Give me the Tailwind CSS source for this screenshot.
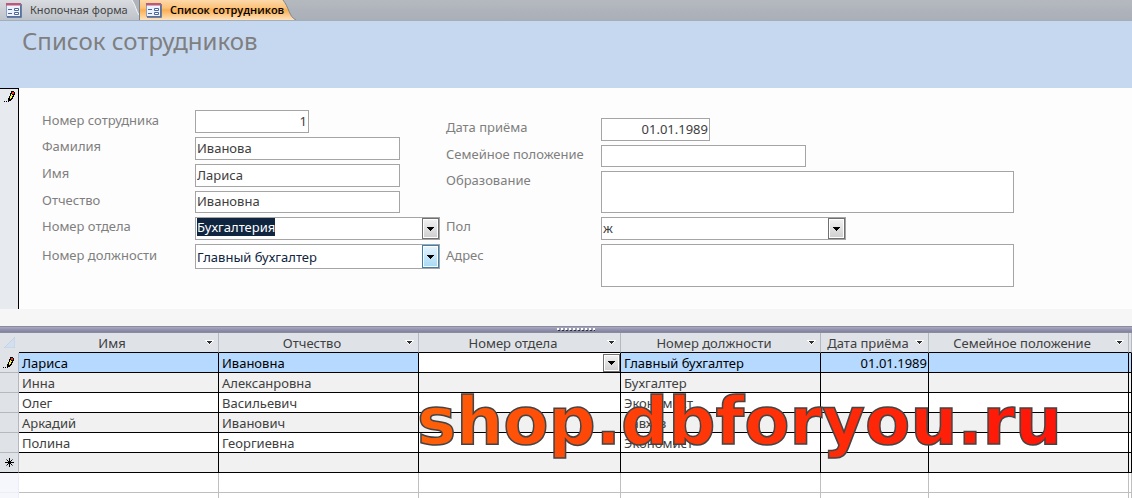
<!DOCTYPE html>
<html lang="ru">
<head>
<meta charset="utf-8">
<meta name="viewport" content="width=device-width, initial-scale=1">
<title>Список сотрудников</title>
<script src="https://cdn.jsdelivr.net/npm/@tailwindcss/browser@4"></script>
</head>
<body class="bg-white font-['Noto_Sans','Open_Sans',sans-serif] text-[13px] leading-4 text-[#404040]">
<svg class="hidden" aria-hidden="true">
  <symbol id="form" viewBox="0 0 16 16">
    <path d="M.5 1.500h14v13H.5z" fill="#eef3fb" stroke="#8ba0c4"/>
    <path d="M15 2v13H1" fill="none" stroke="#4a6494" stroke-width="1.500"/>
    <path d="M0 1h15v2.500H0z" fill="#b85a78"/>
    <path d="M2 7.500h4M2 11.500h4" stroke="#4a66a0"/>
    <path d="M8.500 6.500h4v2h-4zM8.500 10.500h4v2h-4z" fill="#fff" stroke="#4a66a0"/>
  </symbol>
  <symbol id="pencil" viewBox="0 0 12 12" shape-rendering="crispEdges">
    <path d="M0 10h1v1H0zM2 10h1v1H2z" fill="#000"/>
    <path d="M7 0h3v1h1v3h-1v2H9v2H8v1H7v1H5v1H4V7h1V5h1V2h1z" fill="#000"/>
    <path d="M8 1h2v2H8z" fill="#f03020"/>
    <path d="M7 3h1v1h1v1H8v2H7v1H6V5h1z" fill="#f5ee3a"/>
  </symbol>
  <symbol id="down" viewBox="0 0 7 4" shape-rendering="crispEdges"><path d="M0 0h7v1H6v1H5v1H4v1H3V3H2V2H1V1H0z" fill="#000"/></symbol>
  <symbol id="sort" viewBox="0 0 9 5" shape-rendering="crispEdges"><path d="M0 0h9v1H8v1H7v1H6v1H5v1H4V4H3V3H2V2H1V1H0z" fill="#fff"/><path d="M2 1h5v1H6v1H5v1H4V3H3V2H2z" fill="#303030"/></symbol>
</svg>
<div class="flex h-screen flex-col overflow-hidden">
  <nav class="flex h-[21px] shrink-0 border-b border-[#a5adb8] bg-linear-to-b from-[#b5b9bf] to-[#a9afb8] leading-4">
    <a href="#" class="relative flex h-5 w-[140px] items-center gap-2 border-r border-[#7d838b] bg-linear-to-b from-[#d9dce0] to-[#bec3ca] pl-[6px] text-[11px] whitespace-nowrap text-[#444]">
      <svg class="size-4"><use href="#form"/></svg>Кнопочная форма
      <svg class="absolute top-0 right-0 h-5 w-2" viewBox="0 0 8 20"><path d="M1 0h7v15C5 11 5 6 1 0z" fill="#afb4bb"/><path d="M1 0c4 6 4 11 7 15" fill="none" stroke="#f4f5f6"/></svg>
    </a>
    <a href="#" aria-current="page" class="relative flex h-5 w-[156px] items-center gap-2 pl-[6px] whitespace-nowrap text-black">
      <svg class="absolute inset-0 h-5 w-full" viewBox="0 0 156 20" preserveAspectRatio="none"><defs><linearGradient id="tab" x2="0" y2="1"><stop stop-color="#fcd9ab"/><stop offset=".4" stop-color="#fcc27a"/><stop offset=".5" stop-color="#fbae50"/><stop offset="1" stop-color="#fde3c0"/></linearGradient></defs><path d="M0 0h143c6 7 6 17 13 20H0z" fill="url(#tab)"/><path d="M143 0c6 7 6 17 13 20" fill="none" stroke="#80868e"/></svg>
      <svg class="relative size-4"><use href="#form"/></svg><span class="relative font-['Open_Sans','Noto_Sans',sans-serif] text-[11px] font-semibold">Список сотрудников</span>
    </a>
  </nav>
  <header class="h-[67px] shrink-0 bg-[#c6d8f0] px-[22px] pt-1">
    <h1 class="text-2xl leading-8 text-[#7f7f7f]">Список сотрудников</h1>
  </header>
  <main class="flex h-[221px] shrink-0 bg-[#fdfdfd]">
    <div class="w-[19px] shrink-0 border-t border-r border-black bg-[#e7ebf0] pt-[2px] pl-1"><svg class="size-3"><use href="#pencil"/></svg></div>
    <form class="flex pl-[23px] [&_input]:pb-[2px]">
      <div class="flex w-[404px] flex-col gap-1 pt-[22px]">
        <div class="flex h-[23px]"><label for="id" class="w-[153px] pt-[2px] text-[#7f7f7f]">Номер сотрудника</label><input id="id" value="1" class="w-[114px] border border-[#a5a5a5] bg-white px-[1px] text-right"></div>
        <div class="flex h-[23px]"><label for="fam" class="w-[153px] pt-[1px] text-[#7f7f7f]">Фамилия</label><input id="fam" value="Иванова" class="w-[205px] border border-[#a5a5a5] bg-white px-[1px]"></div>
        <div class="flex h-[23px]"><label for="name" class="w-[153px] pt-[1px] text-[#7f7f7f]">Имя</label><input id="name" value="Лариса" class="w-[205px] border border-[#a5a5a5] bg-white px-[1px]"></div>
        <div class="flex h-[22px]"><label for="otch" class="w-[153px] pt-[1px] text-[#7f7f7f]">Отчество</label><input id="otch" value="Ивановна" class="w-[205px] border border-[#a5a5a5] bg-white px-[1px]"></div>
        <div class="flex h-[23px]"><label for="dept" class="w-[153px] shrink-0 pt-[1px] text-[#7f7f7f]">Номер отдела</label>
          <div class="flex w-[245px] shrink-0 justify-between border border-[#a5a5a5] bg-white pl-[1px]"><select id="dept" class="h-[18px] appearance-none field-sizing-content bg-[#10253f] text-white"><option>Бухгалтерия</option></select><span class="flex w-[17px] items-center justify-center border border-[#707070] bg-linear-to-b from-[#f2f2f2] to-[#cfcfcf] inset-ring inset-ring-white"><svg class="h-1 w-[7px]"><use href="#down"/></svg></span></div></div>
        <div class="flex h-[25px]"><label for="post" class="w-[153px] shrink-0 pt-[3px] text-[#7f7f7f]">Номер должности</label>
          <div class="flex w-[245px] shrink-0 border border-[#a5a5a5] bg-white pl-[1px]"><select id="post" class="flex-1 appearance-none text-[#10253f]"><option>Главный бухгалтер</option></select><span class="flex w-[17px] items-center justify-center border border-[#3c7fb1] bg-linear-to-b from-[#e6f5fd] to-[#a7d9f5] inset-ring inset-ring-white"><svg class="h-1 w-[7px]"><use href="#down"/></svg></span></div></div>
      </div>
      <div class="flex flex-col gap-1 pt-[30px]">
        <div class="flex h-[23px]"><label for="date" class="w-[155px] pt-[1px] text-[#7f7f7f]">Дата приёма</label><input id="date" value="01.01.1989" class="w-[109px] border border-[#a5a5a5] bg-white px-[1px] text-right"></div>
        <div class="flex h-[22px]"><label for="fs" class="w-[155px] pt-[1px] whitespace-nowrap text-[#7f7f7f]">Семейное положение</label><input id="fs" class="w-[205px] border border-[#a5a5a5] bg-white"></div>
        <div class="flex h-[42px]"><label for="edu" class="w-[155px] pt-[1px] text-[#7f7f7f]">Образование</label><textarea id="edu" class="w-[413px] resize-none border border-[#a5a5a5] bg-white"></textarea></div>
        <div class="flex h-[23px]"><label for="sex" class="w-[155px] pt-[1px] text-[#7f7f7f]">Пол</label>
          <div class="flex w-[245px] border border-[#a5a5a5] bg-white pl-[1px]"><select id="sex" class="flex-1 appearance-none pb-[2px]"><option>ж</option></select><span class="flex w-[17px] items-center justify-center border border-[#707070] bg-linear-to-b from-[#f2f2f2] to-[#cfcfcf] inset-ring inset-ring-white"><svg class="h-1 w-[7px]"><use href="#down"/></svg></span></div></div>
        <div class="flex h-[43px]"><label for="adr" class="w-[155px] pt-[3px] text-[#7f7f7f]">Адрес</label><textarea id="adr" class="w-[413px] resize-none border border-[#a5a5a5] bg-white"></textarea></div>
      </div>
    </form>
  </main>
  <div class="h-[17px] shrink-0 bg-[#f6f6f6]"></div>
  <div class="flex h-[7px] shrink-0 items-center justify-center border-y border-[#8a8c9c] bg-linear-to-b from-[#a9a9c0] to-[#8080a0] pl-5"><svg class="h-[3px] w-[38px]" shape-rendering="crispEdges"><path d="M0 1h38" stroke="#fff" stroke-width="2" stroke-dasharray="2 2"/><path d="M1 2.500h37" stroke="#333" stroke-dasharray="2 2"/></svg></div>
  <section class="relative min-h-0 flex-1 overflow-hidden">
    <table class="w-full table-fixed border-separate border-spacing-0 text-left [&_td]:overflow-hidden [&_td]:border-r [&_td]:border-b [&_td]:px-[3px] [&_td]:whitespace-nowrap [&_th]:border-r [&_th]:border-b [&_th]:font-normal [&_th]:whitespace-nowrap">
      <colgroup><col class="w-[19px]"><col class="w-[200px]"><col class="w-[200px]"><col class="w-[202px]"><col class="w-[200px]"><col class="w-[108px]"><col class="w-[200px]"><col></colgroup>
      <thead>
        <tr class="h-5 bg-[#dfe3e8] [&_th]:border-r-[#b4b8bf] [&_th]:border-b-black">
          <th class="border-r-0! border-b-[#dfe3e8]!" aria-label="Выделить всё"><svg class="ml-1 size-[11px]" viewBox="0 0 11 11"><path d="M11 0v11H0z" fill="#d1dfef"/><path d="M11 0v11H0z" fill="none" stroke="#bccbdd" stroke-width=".7"/></svg></th>
          <th><div class="flex items-center pr-1"><span class="flex-1 text-center">Имя</span><svg class="h-[5px] w-[9px]"><use href="#sort"/></svg></div></th>
          <th><div class="flex items-center pr-1"><span class="flex-1 text-center">Отчество</span><svg class="h-[5px] w-[9px]"><use href="#sort"/></svg></div></th>
          <th><div class="flex items-center pr-1"><span class="flex-1 text-center">Номер отдела</span><svg class="h-[5px] w-[9px]"><use href="#sort"/></svg></div></th>
          <th><div class="flex items-center pr-1"><span class="flex-1 text-center">Номер должности</span><svg class="h-[5px] w-[9px]"><use href="#sort"/></svg></div></th>
          <th><div class="flex items-center pr-1"><span class="flex-1 text-center">Дата приёма</span><svg class="h-[5px] w-[9px]"><use href="#sort"/></svg></div></th>
          <th><div class="flex items-center pr-1"><span class="flex-1 text-center">Семейное положение</span><svg class="h-[5px] w-[9px]"><use href="#sort"/></svg></div></th>
          <th></th>
        </tr>
      </thead>
      <tbody class="[&_td]:border-black [&_td:first-child]:border-[#b4b8bf] [&_td:first-child]:bg-[#dfe3e8]">
        <tr class="h-5 bg-[#b6d9ff] text-black"><td><svg class="size-3"><use href="#pencil"/></svg></td><td>Лариса</td><td>Ивановна</td><td class="bg-white p-0!"><div class="flex justify-end"><button type="button" aria-label="Открыть список" class="flex h-[18px] w-[17px] items-center justify-center border border-[#707070] bg-linear-to-b from-[#f2f2f2] to-[#cfcfcf] inset-ring inset-ring-white"><svg class="h-1 w-[7px]"><use href="#down"/></svg></button></div></td><td>Главный бухгалтер</td><td class="px-[1px]! text-right">01.01.1989</td><td></td><td></td></tr>
        <tr class="h-5 bg-[#f1f1f1]"><td></td><td>Инна</td><td>Алексанровна</td><td></td><td>Бухгалтер</td><td></td><td></td><td></td></tr>
        <tr class="h-5 bg-white"><td></td><td>Олег</td><td>Васильевич</td><td></td><td>Экономист</td><td></td><td></td><td></td></tr>
        <tr class="h-5 bg-[#f1f1f1]"><td></td><td>Аркадий</td><td>Иванович</td><td></td><td>Завхоз</td><td></td><td></td><td></td></tr>
        <tr class="h-5 bg-white"><td></td><td>Полина</td><td>Георгиевна</td><td></td><td>Экономист</td><td></td><td></td><td></td></tr>
        <tr class="h-5 bg-[#f1f1f1]"><td class="border-b-black!"><svg class="ml-[2px] size-[9px]" viewBox="0 0 9 9"><path d="M4.500 0v9M0 4.500h9M1.500 1.500l6 6M7.500 1.500l-6 6" stroke="#000"/></svg></td><td></td><td></td><td></td><td></td><td></td><td></td><td></td></tr>
      </tbody>
      <tfoot class="[&_td]:border-[#bfbfbf] [&_td:first-child]:border-[#eceef4] [&_td:first-child]:bg-[#f6f7fd]">
        <tr class="h-5"><td></td><td></td><td></td><td></td><td></td><td></td><td></td><td></td></tr>
        <tr class="h-5"><td></td><td></td><td></td><td></td><td></td><td></td><td></td><td></td></tr>
      </tfoot>
    </table>
    <svg class="pointer-events-none absolute top-[47px] left-[417px] h-[90px] w-[650px]" viewBox="0 0 650 90">
      <defs><linearGradient id="fire" gradientUnits="userSpaceOnUse" x1="0" y1="90" x2="640" y2="0"><stop stop-color="#ff6208"/><stop offset=".4" stop-color="#ff3a08"/><stop offset="1" stop-color="#ff1408"/></linearGradient></defs>
      <text x="0" y="64" font-family="DejaVu Sans, sans-serif" font-weight="700" font-size="66" fill="url(#fire)" stroke="#444" stroke-width="1.500">shop.dbforyou.ru</text>
    </svg>
  </section>
</div>
</body>
</html>
